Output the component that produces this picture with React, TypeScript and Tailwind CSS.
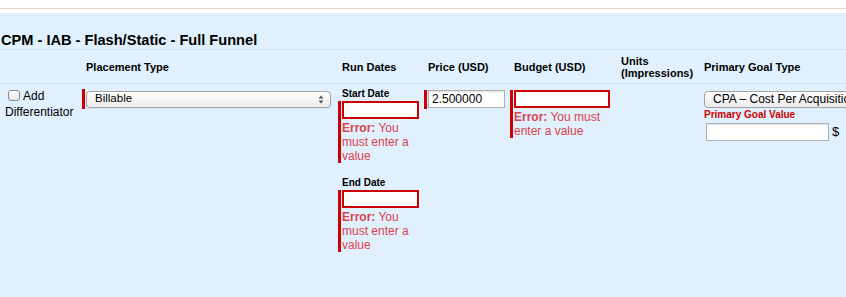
import React from "react";

const errText = "text-[12px] leading-[14px] text-[#d9434e]";

function SelectArrows() {
  return (
    <svg width="6" height="9" viewBox="0 0 6 9" className="shrink-0">
      <path d="M3 0.5 L5.5 3.5 L0.5 3.5 Z" fill="#555" />
      <path d="M3 8.5 L5.5 5.5 L0.5 5.5 Z" fill="#555" />
    </svg>
  );
}

function ErrorInput({ className = "" }: { className?: string }) {
  return <div className={`h-[18px] border-2 border-[#cc0000] bg-white ${className}`} />;
}

function ErrorMsg({ lines }: { lines: string[] }) {
  return (
    <div className={`mt-[2px] ${errText}`}>
      {lines.map((l, i) => (
        <div key={i}>
          {i === 0 ? (
            <>
              <span className="font-bold">Error:</span>
              {l}
            </>
          ) : (
            l
          )}
        </div>
      ))}
    </div>
  );
}

export default function App() {
  return (
    <div className="w-[846px] h-[297px] overflow-hidden bg-white font-['Liberation_Sans',Arial,sans-serif] text-black">
      <div className="h-[8px]" />
      <div className="h-px bg-[#d9d9d9]" />
      <div className="h-[4px]" />
      <div className="bg-[#e1f0fd] h-[284px] w-[846px] overflow-hidden">
        <div className="pt-[19px] border-b border-[#d3dfea]">
          <h2 className="text-[14.6px] leading-[17px] font-bold pl-px">CPM - IAB - Flash/Static - Full Funnel</h2>
        </div>

        {/* header row */}
        <div className="flex h-[34px] items-center border-b border-[#d3dfea] text-[11px] leading-[12px] font-bold">
          <div className="w-[82px] shrink-0" />
          <div className="w-[256px] shrink-0 pl-[4px]">Placement Type</div>
          <div className="w-[86px] shrink-0 pl-[4px]">Run Dates</div>
          <div className="w-[86px] shrink-0 pl-[4px]">Price (USD)</div>
          <div className="w-[107px] shrink-0 pl-[4px]">Budget (USD)</div>
          <div className="w-[83px] shrink-0 pl-[4px]">
            <div>Units</div>
            <div>(Impressions)</div>
          </div>
          <div className="w-[146px] shrink-0 pl-[4px] whitespace-nowrap">Primary Goal Type</div>
        </div>

        {/* body row */}
        <div className="flex items-start pt-[5px]">
          <div className="w-[82px] shrink-0 pl-[5px] -mt-px text-[12px] leading-[16px]">
            <span className="inline-block align-[-1px] ml-[3px] mr-[3px] w-[12px] h-[11px] rounded-[3px] border border-[#8a8a8a] bg-gradient-to-b from-white to-[#e8e8e8]" />
            Add Differentiator
          </div>

          <div className="w-[256px] shrink-0">
            <div className="flex items-center h-[20px] border-l-[3px] border-[#cc0000] pl-px">
              <div className="flex items-center justify-between w-[245px] h-[17px] rounded-[4px] border border-[#a3a3a3] bg-gradient-to-b from-white to-[#ebebeb] pl-[8px] pr-[6px] text-[11.5px] shadow-[0_1px_0_rgba(0,0,0,0.05)]">
                <span>Billable</span>
                <SelectArrows />
              </div>
            </div>
          </div>

          <div className="w-[86px] shrink-0 -mt-px">
            <div className="pl-[4px] text-[10px] leading-[12px] font-bold">Start Date</div>
            <div className="border-l-[3px] border-[#cc0000] pl-px">
              <ErrorInput className="mt-px w-[77px]" />
              <ErrorMsg lines={[" You", "must enter a", "value"]} />
            </div>
            <div className="pl-[4px] mt-[14px] text-[10px] leading-[12px] font-bold">End Date</div>
            <div className="border-l-[3px] border-[#cc0000] pl-px">
              <ErrorInput className="mt-px w-[77px]" />
              <ErrorMsg lines={[" You", "must enter a", "value"]} />
            </div>
          </div>

          <div className="w-[86px] shrink-0">
            <div className="border-l-[3px] border-[#cc0000] pl-px pb-px">
              <div className="mt-px w-[77px] h-[18px] border border-[#b0b0b0] bg-white shadow-[inset_0_1px_1px_rgba(0,0,0,0.12)] pl-[3px] text-[12px] leading-[16px]">
                2.500000
              </div>
            </div>
          </div>

          <div className="w-[107px] shrink-0">
            <div className="border-l-[3px] border-[#cc0000] pl-px">
              <ErrorInput className="mt-px w-[96px]" />
              <ErrorMsg lines={[" You must", "enter a value"]} />
            </div>
          </div>

          <div className="w-[83px] shrink-0" />

          <div className="w-[200px] shrink-0 pl-[4px] whitespace-nowrap">
            <div className="flex items-center h-[20px]">
              <div className="w-[190px] h-[17px] rounded-[4px] border border-[#a3a3a3] bg-gradient-to-b from-white to-[#ebebeb] pl-[8px] text-[12px] leading-[15px] overflow-hidden">
                CPA – Cost Per Acquisition
              </div>
            </div>
            <div className="text-[10px] leading-[12px] font-bold text-[#cc0000]">Primary Goal Value</div>
            <div className="flex items-center mt-px pl-[2px]">
              <div className="w-[123px] h-[18px] border border-[#b0b0b0] bg-white shadow-[inset_0_1px_1px_rgba(0,0,0,0.12)]" />
              <span className="ml-[3px] text-[13px]">$</span>
            </div>
          </div>
        </div>
      </div>
    </div>
  );
}
